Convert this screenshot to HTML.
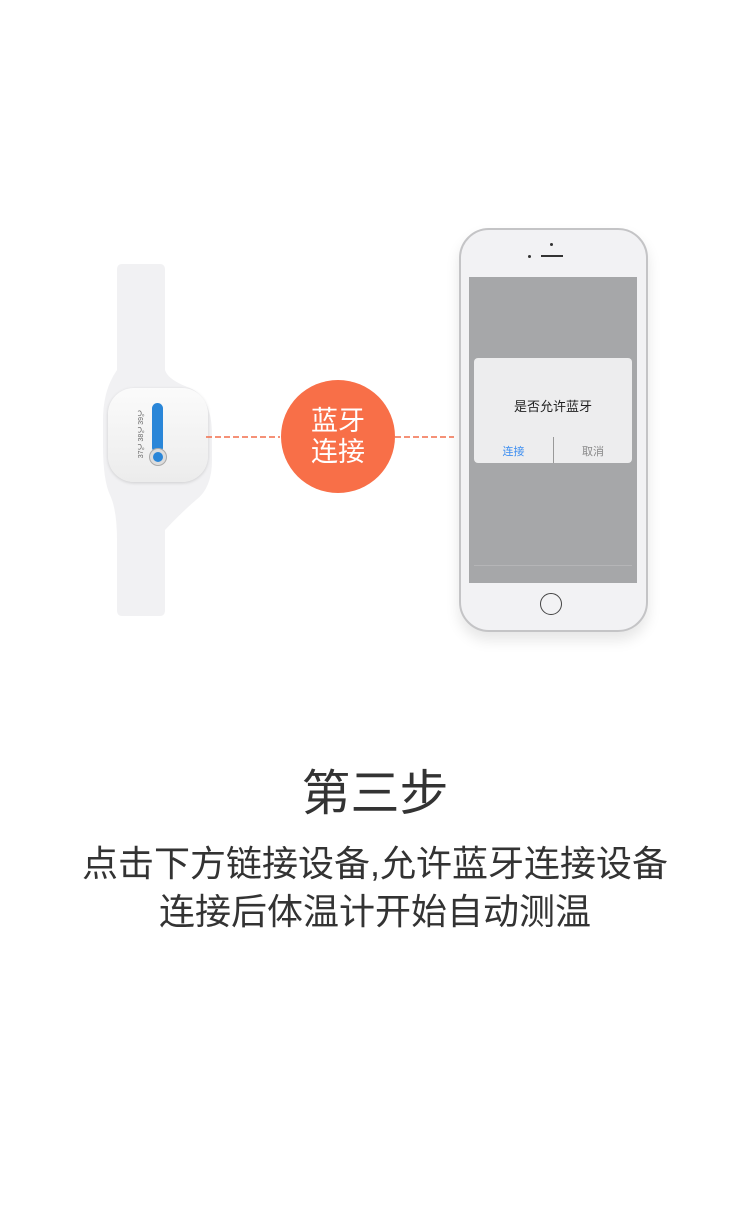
<!DOCTYPE html>
<html><head><meta charset="utf-8"><style>
body{margin:0;width:750px;height:1206px;background:#fff;position:relative;overflow:hidden;font-family:"Liberation Sans","Noto Sans CJK SC",sans-serif}
.a{position:absolute}
</style></head><body>
<!-- band -->
<svg class="a" style="left:100px;top:260px" width="120" height="360">
<path d="M22 4 H60 Q65 4 65 10 V110 Q68 120 90 128 Q112 138 112 175 V200 Q112 228 96 240 Q82 252 65 270 V350 Q65 356 60 356 H22 Q17 356 17 350 V280 Q17 250 10 235 Q3 220 3 185 V160 Q3 130 17 110 V10 Q17 4 22 4Z" fill="#f1f1f3"/>
</svg>
<div class="a" style="left:108px;top:388px;width:100px;height:94px;background:linear-gradient(#fbfbfb,#ececec);border-radius:26px;box-shadow:0 1px 3px rgba(0,0,0,.15)"></div>
<div class="a" style="left:152px;top:403px;width:11px;height:50px;background:#2a86d8;border-radius:6px"></div>
<div class="a" style="left:149px;top:448px;width:16px;height:16px;background:#ddd;border-radius:50%;border:1px solid #aaa"></div>
<div class="a" style="left:153px;top:452px;width:10px;height:10px;background:#2a86d8;border-radius:50%"></div>
<div class="a" style="left:138px;top:410px;font-size:7px;color:#666;writing-mode:vertical-rl;transform:rotate(180deg);line-height:8px">37℃ 38℃ 39℃</div>
<!-- dashes -->
<svg class="a" style="left:0;top:430px" width="750" height="14">
<line x1="206" y1="7" x2="280" y2="7" stroke="#f26d4a" stroke-width="1.5" stroke-dasharray="6,3"/>
<line x1="395" y1="7" x2="454" y2="7" stroke="#f26d4a" stroke-width="1.5" stroke-dasharray="6,3"/>
</svg>
<div class="a" style="left:281px;top:380px;width:114px;height:113px;border-radius:50%;background:#f86f48;color:#fff;font-size:27px;line-height:31px;text-align:center;display:flex;align-items:center;justify-content:center">蓝牙<br>连接</div>
<!-- phone -->
<div class="a" style="left:459px;top:228px;width:189px;height:404px;background:#f2f2f4;border-radius:30px;border:2px solid #c4c4c6;box-sizing:border-box;box-shadow:0 8px 14px rgba(0,0,0,.1)"></div>
<div class="a" style="left:550px;top:243px;width:3px;height:3px;background:#333;border-radius:50%"></div>
<div class="a" style="left:528px;top:255px;width:3px;height:3px;background:#333;border-radius:50%"></div>
<div class="a" style="left:541px;top:255px;width:22px;height:2px;background:#333"></div>
<div class="a" style="left:469px;top:277px;width:168px;height:306px;background:#a6a7a9"></div>
<div class="a" style="left:474px;top:565px;width:158px;height:1px;background:#b5b5b7"></div>
<div class="a" style="left:474px;top:358px;width:158px;height:105px;background:#ededee;border-radius:4px"></div>
<div class="a" style="left:474px;top:396px;width:158px;text-align:center;font-size:13px;color:#222">是否允许蓝牙</div>
<div class="a" style="left:553px;top:437px;width:1px;height:26px;background:#999"></div>
<div class="a" style="left:474px;top:443px;width:79px;text-align:center;font-size:11px;color:#3d8ef0">连接</div>
<div class="a" style="left:554px;top:443px;width:78px;text-align:center;font-size:11px;color:#888">取消</div>
<div class="a" style="left:540px;top:593px;width:22px;height:22px;border:1px solid #444;border-radius:50%;box-sizing:border-box"></div>
<!-- text -->
<div class="a" style="left:0;top:763px;width:750px;text-align:center;font-size:49px;color:#333;line-height:62px">第三步</div>
<div class="a" style="left:0;top:840px;width:750px;text-align:center;font-size:36px;color:#333;line-height:48px">点击下方链接设备,允许蓝牙连接设备<br>连接后体温计开始自动测温</div>
</body></html>
